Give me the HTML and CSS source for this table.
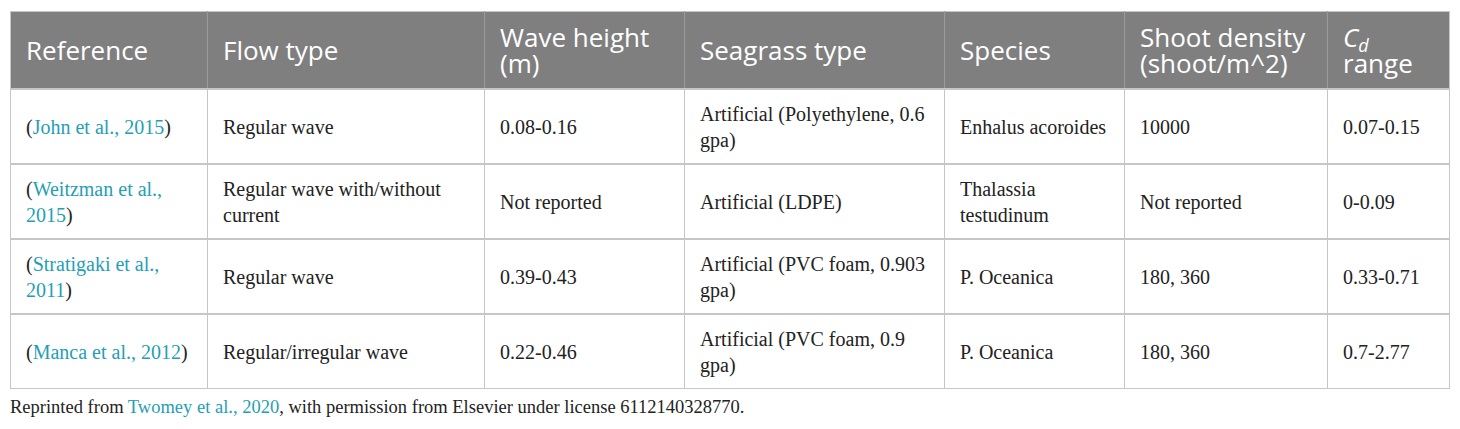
FILE: index.html
```html
<!DOCTYPE html>
<html lang="en">
<head>
    <meta charset="UTF-8">
    <title>Seagrass drag coefficient studies</title>
    <link rel="stylesheet" href="styles.css">
</head>
<body>
    <div class="wrap">
        <table class="data">
            <colgroup>
                <col class="c1"><col class="c2"><col class="c3"><col class="c4">
                <col class="c5"><col class="c6"><col class="c7">
            </colgroup>
            <thead>
                <tr>
                    <th>Reference</th>
                    <th>Flow type</th>
                    <th>Wave height (m)</th>
                    <th>Seagrass type</th>
                    <th>Species</th>
                    <th>Shoot density (shoot/m^2)</th>
                    <th><i>C</i><sub><i>d</i></sub><br>range</th>
                </tr>
            </thead>
            <tbody>
                <tr>
                    <td>(<a href="#">John et al., 2015</a>)</td>
                    <td>Regular wave</td>
                    <td>0.08-0.16</td>
                    <td>Artificial (Polyethylene, 0.6 gpa)</td>
                    <td>Enhalus acoroides</td>
                    <td>10000</td>
                    <td>0.07-0.15</td>
                </tr>
                <tr>
                    <td>(<a href="#">Weitzman et al., 2015</a>)</td>
                    <td>Regular wave with/without current</td>
                    <td>Not reported</td>
                    <td>Artificial (LDPE)</td>
                    <td>Thalassia testudinum</td>
                    <td>Not reported</td>
                    <td>0-0.09</td>
                </tr>
                <tr>
                    <td>(<a href="#">Stratigaki et al., 2011</a>)</td>
                    <td>Regular wave</td>
                    <td>0.39-0.43</td>
                    <td>Artificial (PVC foam, 0.903 gpa)</td>
                    <td>P. Oceanica</td>
                    <td>180, 360</td>
                    <td>0.33-0.71</td>
                </tr>
                <tr>
                    <td>(<a href="#">Manca et al., 2012</a>)</td>
                    <td>Regular/irregular wave</td>
                    <td>0.22-0.46</td>
                    <td>Artificial (PVC foam, 0.9 gpa)</td>
                    <td>P. Oceanica</td>
                    <td>180, 360</td>
                    <td>0.7-2.77</td>
                </tr>
            </tbody>
        </table>
        <p class="note">Reprinted from <a href="#">Twomey et al., 2020</a>, with permission from Elsevier under license 6112140328770.</p>
    </div>
</body>
</html>
```

FILE: styles.css
```css
body {
    margin: 0;
    background: #fff;
    color: #222;
    font-family: "Liberation Serif", "Times New Roman", serif;
}
.wrap {
    padding: 11px 11px 0 10px;
}
.data {
    width: 1439px;
    border-collapse: collapse;
    table-layout: fixed;
    border: 1px solid #c6c6c6;
}
.c1 { width: 197px; }
.c2 { width: 277px; }
.c3 { width: 200px; }
.c4 { width: 260px; }
.c5 { width: 180px; }
.c6 { width: 203px; }
.c7 { width: 122px; }

.data th {
    background: #7f7f7f;
    color: #fff;
    font-family: "Open Sans", "Noto Sans", sans-serif;
    font-weight: normal;
    font-size: 26px;
    line-height: 26px;
    text-align: left;
    padding: 12px 14px 12px 15px;
    height: 52px;
    border-left: 1px solid #9a9a9a;
}
.data th:first-child {
    border-left: none;
}
.data th sub {
    font-size: 18px;
    vertical-align: -5px;
    line-height: 0;
}
.data td {
    font-size: 20px;
    line-height: 26px;
    padding: 11px 15px 10px;
    height: 52px;
    vertical-align: middle;
    border: 1px solid #c6c6c6;
    border-top-width: 2px;
}
a {
    color: #1fa0b5;
    text-decoration: none;
}
.note {
    margin: 8px 0 0;
    font-size: 18.5px;
}
```
